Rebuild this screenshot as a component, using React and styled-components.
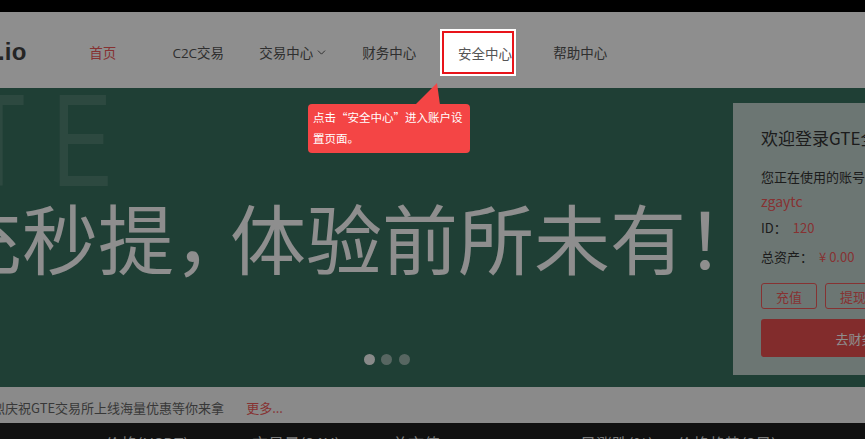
import React from "react";
import styled, { createGlobalStyle } from "styled-components";
import { ChevronDown } from "lucide-react";

const RED = "#f05a5a";

const GlobalStyle = createGlobalStyle`
  html, body { margin: 0; padding: 0; overflow: hidden; background: #fff; }
  body { font-family: "Open Sans", "Noto Sans CJK SC", sans-serif; }
  * { box-sizing: border-box; }
`;

const Page = styled.div`
  position: relative;
  width: 865px;
  height: 439px;
  overflow: hidden;
  display: flex;
  flex-direction: column;
`;

const TopBar = styled.div`
  height: 12px;
  flex: 0 0 12px;
  background: #000;
`;

const Header = styled.header`
  flex: 0 0 76px;
  height: 76px;
  background: #fff;
  display: flex;
  align-items: center;
  padding-top: 4px;
`;

const Logo = styled.div`
  flex: 0 0 57px;
  margin-left: -2px;
  font: bold 24px "Liberation Sans", Arial, sans-serif;
  color: #444;
  letter-spacing: 0.2px;
`;

const Nav = styled.nav`
  display: flex;
  align-items: center;
`;

const NavItem = styled.div`
  flex: 0 0 95.5px;
  display: flex;
  align-items: center;
  justify-content: center;
  gap: 2px;
  font-size: 13.5px;
  color: ${(p) => (p.$active ? RED : "#555")};
  white-space: nowrap;
`;

const Banner = styled.section`
  position: relative;
  flex: 0 0 299px;
  height: 299px;
  background: #38715f;
  overflow: hidden;
  display: flex;
`;

const BgWord = styled.div`
  position: absolute;
  left: -124px;
  top: -13px;
  font: 132px/1 "Liberation Sans", Arial, sans-serif;
  letter-spacing: 40px;
  color: rgba(255, 255, 255, 0.13);
  transform: scaleX(0.67);
  transform-origin: left top;
  white-space: nowrap;
  pointer-events: none;
`;

const Slide = styled.div`
  position: relative;
  flex: 0 0 733px;
  min-width: 0;
  display: flex;
  flex-direction: column;
`;

const Slogan = styled.h1`
  margin: 110px 0 0 -54px;
  font: 400 76px/76px "Noto Sans CJK SC", sans-serif;
  color: #fff;
  white-space: nowrap;
`;

const Punct = styled.span`
  margin-right: -20px;
`;

const Dots = styled.div`
  margin-top: auto;
  padding: 0 0 22px 40px;
  display: flex;
  justify-content: center;
  gap: 6.5px;
`;

const Dot = styled.span`
  width: 11px;
  height: 11px;
  border-radius: 50%;
  background: ${(p) => (p.$active ? "rgba(255,255,255,0.95)" : "rgba(255,255,255,0.5)")};
`;

const LoginCard = styled.aside`
  position: relative;
  flex: 0 0 270px;
  min-width: 0;
  overflow: hidden;
  margin-top: 15px;
  height: 272px;
  background: rgba(255, 255, 255, 0.7);
  padding: 23px 28px 0;
  display: flex;
  flex-direction: column;
  white-space: nowrap;
  font-family: "Noto Sans CJK SC", sans-serif;
  color: #333;
`;

const CardTitle = styled.div`
  font-size: 17px;
  line-height: 24px;
`;

const CardLine = styled.div`
  margin-top: ${(p) => p.$mt}px;
  font-size: ${(p) => p.$size || 13}px;
  line-height: 20px;
  color: ${(p) => (p.$red ? RED : "#333")};
  display: flex;
`;

const Value = styled.span`
  margin-left: 6px;
  color: ${RED};
`;

const ButtonRow = styled.div`
  margin-top: 16px;
  display: flex;
  gap: 8px;
`;

const SmallButton = styled.button`
  flex: 0 0 56px;
  height: 26px;
  border: 1px solid ${RED};
  border-radius: 3px;
  background: transparent;
  color: ${RED};
  font: 13px "Noto Sans CJK SC", sans-serif;
  padding: 0;
`;

const BigButton = styled.button`
  flex: 0 0 38px;
  margin-top: 10px;
  height: 38px;
  width: 100%;
  border: none;
  border-radius: 3px;
  background: #ea5050;
  color: #fff;
  font: 13px "Noto Sans CJK SC", sans-serif;
  padding: 0;
`;

const Notice = styled.div`
  flex: 0 0 36px;
  height: 36px;
  padding-top: 4px;
  background: #f8f8f8;
  display: flex;
  align-items: center;
  font-size: 13px;
  color: #666;
  white-space: nowrap;
`;

const NoticeText = styled.span`
  margin-left: -8px;
  font-family: "Noto Sans CJK SC", sans-serif;
`;

const More = styled.span`
  margin-left: 22px;
  color: ${RED};
  font-family: "Noto Sans CJK SC", sans-serif;
`;

const TableHead = styled.div`
  flex: 1;
  background: #1e1e1e;
  padding: 12px 0 0 105px;
  display: grid;
  grid-template-columns: 147px 140px 188px 97px auto;
  font: 16px/16px "Noto Sans CJK SC", sans-serif;
  color: #ddd;
  white-space: nowrap;
`;

const Mask = styled.div`
  position: absolute;
  inset: 0;
  background: rgba(0, 0, 0, 0.443);
  z-index: 10;
`;

const Spotlight = styled.div`
  position: absolute;
  left: 442px;
  top: 31px;
  width: 72px;
  height: 43px;
  border: 2px solid #e8141a;
  box-shadow: 0 0 0 2px #fff;
  background: #fff;
  z-index: 11;
  display: flex;
  align-items: center;
  padding-left: 14px;
  font-size: 13.5px;
  color: #555;
  white-space: nowrap;
`;

const Tooltip = styled.div`
  position: absolute;
  left: 308px;
  top: 104px;
  width: 162px;
  padding: 3px 5px 4px;
  background: #f44545;
  color: #fff;
  border-radius: 4px;
  font: 11.5px/21px "Noto Sans CJK SC", sans-serif;
  white-space: nowrap;
  z-index: 11;

  &::before {
    content: "";
    position: absolute;
    left: 107px;
    top: -21px;
    width: 25px;
    height: 22px;
    background: #f44545;
    clip-path: polygon(0 100%, 88% 0, 100% 100%);
  }
`;

const navItems = ["首页", "C2C交易", "交易中心", "财务中心", "安全中心", "帮助中心"];
const heads = ["价格(USDT)", "交易量(24H)", "总市值", "日涨跌(%)", "价格趋势(3日)"];

export default function App() {
  return (
    <>
      <GlobalStyle />
      <Page>
        <TopBar />
        <Header>
          <Logo>.io</Logo>
          <Nav>
            {navItems.map((t, i) => (
              <NavItem key={t} $active={i === 0}>
                {t}
                {t === "交易中心" && <ChevronDown size={13} strokeWidth={1.8} />}
              </NavItem>
            ))}
          </Nav>
        </Header>
        <Banner>
          <BgWord>GTE</BgWord>
          <Slide>
            <Slogan>
              充秒提<Punct>，</Punct>体验前所未有！
            </Slogan>
            <Dots>
              <Dot $active />
              <Dot />
              <Dot />
            </Dots>
          </Slide>
          <LoginCard>
            <CardTitle>欢迎登录GTE全球数字资产交易平台</CardTitle>
            <CardLine $mt={17}>您正在使用的账号：</CardLine>
            <CardLine $mt={4} $size={14} $red>zgaytc</CardLine>
            <CardLine $mt={7}>
              ID：<Value>120</Value>
            </CardLine>
            <CardLine $mt={9}>
              总资产：<Value>¥ 0.00</Value>
            </CardLine>
            <ButtonRow>
              <SmallButton>充值</SmallButton>
              <SmallButton>提现</SmallButton>
              <SmallButton>转账</SmallButton>
            </ButtonRow>
            <BigButton>去财务中心</BigButton>
          </LoginCard>
        </Banner>
        <Notice>
          <NoticeText>烈庆祝GTE交易所上线海量优惠等你来拿</NoticeText>
          <More>更多...</More>
        </Notice>
        <TableHead>
          {heads.map((h) => (
            <span key={h}>{h}</span>
          ))}
        </TableHead>
        <Mask />
        <Spotlight>安全中心</Spotlight>
        <Tooltip>
          点击“安全中心”进入账户设
          <br />
          置页面。
        </Tooltip>
      </Page>
    </>
  );
}
